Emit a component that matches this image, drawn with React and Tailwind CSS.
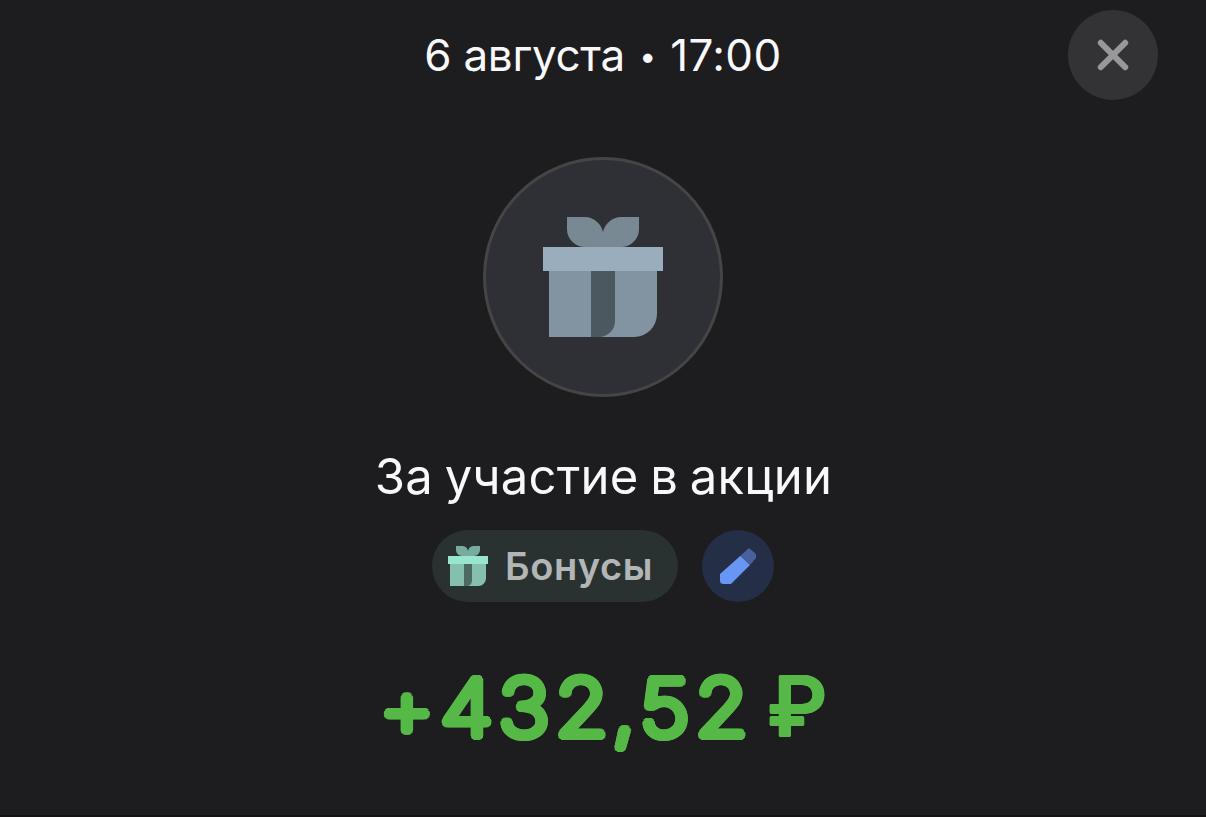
const GiftIcon = ({ className, bow, lid, box, ribbon }) => (
  <svg viewBox="0 0 120 120" className={className} aria-hidden="true">
    <path
      d="M24 0h18a19 19 0 0 1 18 15a19 19 0 0 1 18-15h18v12a18 18 0 0 1-18 18H42a18 18 0 0 1-18-18z"
      fill={bow}
    />
    <path d="M6 54h108v43a23 23 0 0 1-23 23H6z" fill={box} />
    <path d="M48 54h24v50a16 16 0 0 1-16 16h-8z" fill={ribbon} />
    <path d="M0 30h120v24H0z" fill={lid} />
  </svg>
);

const PencilIcon = ({ className }) => (
  <svg viewBox="0 0 36 36" className={className} aria-hidden="true">
    <path d="M0 26L20.5 7.8L30 17L11 36H3.5a3.5 3.5 0 0 1-3.5-3.5z" fill="#6796f4" />
    <path d="M20.5 7.8L29 0L34.8 5a4 4 0 0 1 .4 6L30 17z" fill="#46619b" />
  </svg>
);

const Operation = () => {
  return (
    <div className="flex h-[817px] w-[1206px] flex-col overflow-hidden border-b-2 border-[#161315] bg-[#1d1d1f] font-['Inter',sans-serif] text-[#f8f8fa]">
      {/* header */}
      <header className="grid h-[110px] shrink-0 grid-cols-[90px_1fr_90px] items-center px-12">
        <span />
        <h1 className="text-center text-[44px] leading-none tracking-[-0.3px] whitespace-nowrap">
          6 августа{" "}
          <span className="inline-block w-[21px] text-center align-[4px] text-[30px] leading-none">
            •
          </span>{" "}
          <span className="tracking-[0.4px]">17:00</span>
        </h1>
        <button
          aria-label="Закрыть"
          className="flex size-[90px] items-center justify-center rounded-full bg-[#333335]"
        >
          <svg viewBox="0 0 32 32" className="size-8">
            <path
              d="M3.8 3.8l24.4 24.4M28.2 3.8L3.8 28.2"
              stroke="#98989b"
              strokeWidth="6"
              strokeLinecap="round"
            />
          </svg>
        </button>
      </header>

      <main className="flex flex-col items-center">
        {/* category picture */}
        <div className="mt-[47px] flex size-[240px] items-center justify-center rounded-full border-3 border-[#454548] bg-[#2f3035]">
          <GiftIcon
            className="size-[120px]"
            bow="#788993"
            lid="#99adbc"
            box="#8294a1"
            ribbon="#4c5860"
          />
        </div>

        <h2 className="mt-[54px] pl-px text-[49px] leading-[52px] tracking-[0.25px] whitespace-nowrap [word-spacing:-2.5px]">
          За участие в акции
        </h2>

        {/* category and edit button */}
        <div className="mt-[27px] flex gap-6">
          <div className="flex h-[72px] w-[246px] items-center rounded-full bg-[#293231] pl-4">
            <GiftIcon
              className="size-10 shrink-0"
              bow="#77ad9e"
              lid="#99e6d0"
              box="#85bfae"
              ribbon="#4d6963"
            />
            <span className="ml-[17px] text-[38px] leading-none font-semibold tracking-[0.6px] text-[#b3b6b6]">
              Бонусы
            </span>
          </div>
          <button
            aria-label="Изменить"
            className="flex size-[72px] items-center justify-center rounded-full bg-[#242e47]"
          >
            <PencilIcon className="size-9" />
          </button>
        </div>

        {/* amount, the shadow ring rounds the stroke ends */}
        <p className="mt-[56px] flex items-baseline pl-[31px] text-[79px] leading-[96px] whitespace-nowrap text-[#56b947]">
          <span className="inline-block origin-right scale-x-[1.09] font-extralight tracking-[5.1px] [text-shadow:4px_0_0,3.7px_1.5px_0,2.8px_2.8px_0,1.5px_3.7px_0,0_4px_0,-1.5px_3.7px_0,-2.8px_2.8px_0,-3.7px_1.5px_0,-4px_0_0,-3.7px_-1.5px_0,-2.8px_-2.8px_0,-1.5px_-3.7px_0,0_-4px_0,1.5px_-3.7px_0,2.8px_-2.8px_0,3.7px_-1.5px_0]">
            +43<span className="tracking-[3.5px]">2,</span>52
          </span>
          <span className="ml-3.5 inline-block text-[83px] font-medium [text-shadow:1.5px_0_0,1px_1px_0,0_1px_0,-1px_1px_0,-1.5px_0_0,-1px_-1px_0,0_-1px_0,1px_-1px_0]">
            ₽
          </span>
        </p>
      </main>
    </div>
  );
};

export default Operation;
